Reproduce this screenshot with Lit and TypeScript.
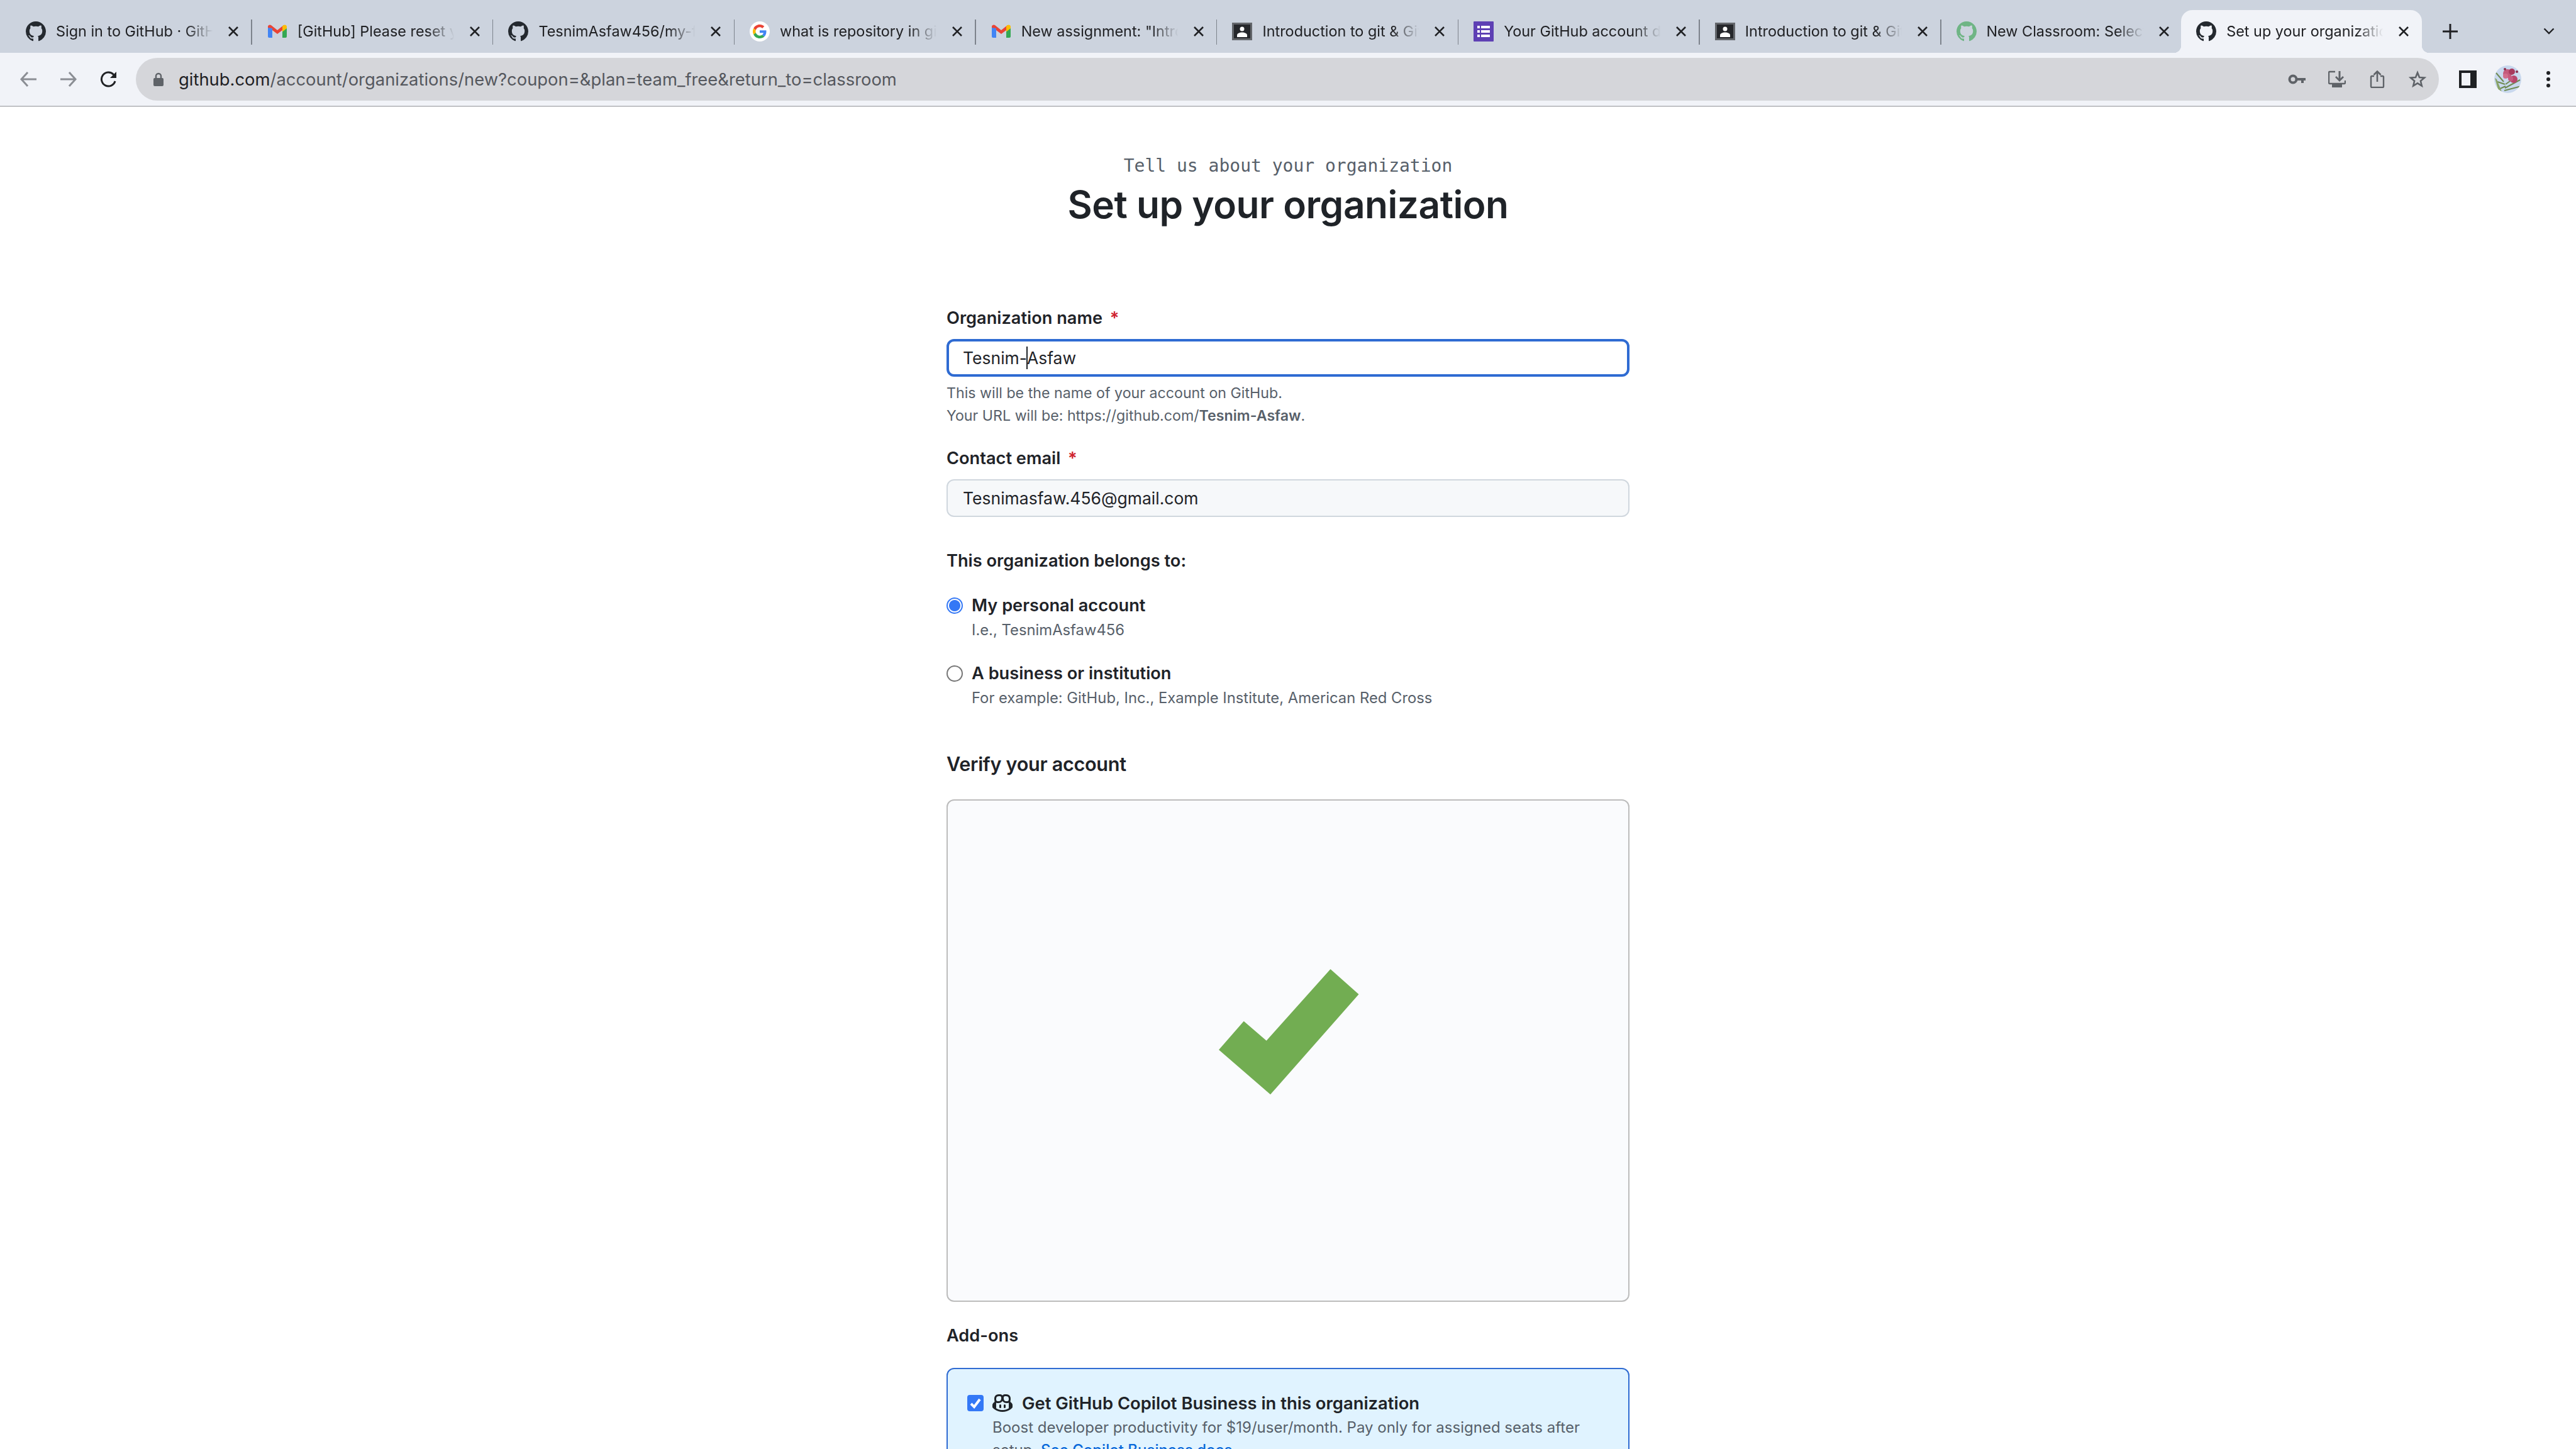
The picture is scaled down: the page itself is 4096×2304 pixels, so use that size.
import { LitElement, html, css } from "lit";
import { customElement } from "lit/decorators.js";

const GH_MARK =
  "M8 0c4.42 0 8 3.58 8 8a8.013 8.013 0 0 1-5.45 7.59c-.4.08-.55-.17-.55-.38 0-.27.01-1.13.01-2.2 0-.75-.25-1.23-.54-1.48 1.78-.2 3.65-.88 3.65-3.95 0-.88-.31-1.59-.82-2.15.08-.2.36-1.02-.08-2.12 0 0-.67-.22-2.2.82-.64-.18-1.32-.27-2-.27-.68 0-1.36.09-2 .27-1.53-1.03-2.2-.82-2.2-.82-.44 1.1-.16 1.92-.08 2.12-.51.56-.82 1.28-.82 2.15 0 3.06 1.86 3.75 3.64 3.95-.23.2-.44.55-.51 1.07-.46.21-1.61.55-2.33-.66-.15-.24-.6-.83-1.23-.82-.67.01-.27.38.01.53.34.19.73.9.82 1.13.16.45.68 1.31 2.69.94 0 .67.01 1.3.01 1.49 0 .21-.15.45-.55.38A7.995 7.995 0 0 1 0 8c0-4.42 3.58-8 8-8Z";

const COPILOT =
  "M7.998 15.035c-4.562 0-7.873-2.914-7.998-3.749V9.338c.085-.628.677-1.686 1.588-2.065.013-.07.024-.143.036-.218.029-.183.06-.384.126-.612-.201-.508-.254-1.084-.254-1.656 0-.87.128-1.769.693-2.484.579-.733 1.494-1.124 2.724-1.261 1.206-.134 2.262.034 2.944.765.05.053.096.108.139.165.044-.057.094-.112.143-.165.682-.731 1.738-.899 2.944-.765 1.23.137 2.145.528 2.724 1.261.566.715.693 1.614.693 2.484 0 .572-.053 1.148-.254 1.656.066.228.098.429.126.612.012.076.024.148.037.218.924.385 1.522 1.471 1.591 2.095v1.872c0 .766-3.351 3.795-8.002 3.795Zm0-1.485c2.28 0 4.584-1.11 5.002-1.433V7.862l-.023-.116c-.49.21-1.075.291-1.727.291-1.146 0-2.059-.327-2.71-.991A3.222 3.222 0 0 1 8 6.303a3.24 3.24 0 0 1-.544.743c-.65.664-1.563.991-2.71.991-.652 0-1.236-.081-1.727-.291l-.023.116v4.255c.419.323 2.722 1.433 5.002 1.433ZM6.762 2.83c-.193-.206-.637-.413-1.682-.297-1.019.113-1.479.404-1.713.7-.247.312-.369.789-.369 1.554 0 .793.129 1.171.308 1.371.162.181.519.379 1.442.379.853 0 1.339-.235 1.638-.54.315-.322.527-.827.617-1.553.117-.935-.037-1.395-.241-1.614Zm4.155-.297c-1.044-.116-1.488.091-1.681.297-.204.219-.359.679-.242 1.614.091.726.303 1.231.618 1.553.299.305.784.54 1.638.54.922 0 1.28-.198 1.442-.379.179-.2.308-.578.308-1.371 0-.765-.123-1.242-.37-1.554-.233-.296-.693-.587-1.713-.7ZM6.25 9.037a.75.75 0 0 1 .75.75v1.501a.75.75 0 0 1-1.5 0V9.787a.75.75 0 0 1 .75-.75Zm4.25.75v1.501a.75.75 0 0 1-1.5 0V9.787a.75.75 0 0 1 1.5 0Z";

type Fav = "gh" | "ghGreen" | "gmail" | "google" | "person" | "forms";

const TABS: { fav: Fav; title: string }[] = [
  { fav: "gh", title: "Sign in to GitHub · GitHub" },
  { fav: "gmail", title: "[GitHub] Please reset your password" },
  { fav: "gh", title: "TesnimAsfaw456/my-first-repo" },
  { fav: "google", title: "what is repository in git - Google Search" },
  { fav: "gmail", title: 'New assignment: "Introduction to git"' },
  { fav: "person", title: "Introduction to git & GitHub" },
  { fav: "forms", title: "Your GitHub account details" },
  { fav: "person", title: "Introduction to git & GitHub" },
  { fav: "ghGreen", title: "New Classroom: Select organization" },
];

function favicon(kind: Fav) {
  switch (kind) {
    case "gh":
      return html`<svg class="fav" viewBox="0 0 16 16"><path fill="#24292f" d=${GH_MARK} /></svg>`;
    case "ghGreen":
      return html`<svg class="fav" viewBox="0 0 16 16"><path fill="#6fb585" d=${GH_MARK} /></svg>`;
    case "gmail":
      return html`<svg class="fav" viewBox="0 0 32 32">
        <path fill="#4285f4" d="M1 9h7v17H3a2 2 0 0 1-2-2Z" />
        <path fill="#34a853" d="M24 9h7v15a2 2 0 0 1-2 2h-5Z" />
        <path fill="#ea4335" d="M1 10V8.500C1 6 4 4.500 6 6l10 8 10-8v6.500L16 20 8 14V11Z" />
        <path fill="#fbbc04" d="M24 7.600 26 6c2-1.500 5-.1 5 2.500V11l-7 5.500Z" />
      </svg>`;
    case "google":
      return html`<svg class="fav" viewBox="0 0 32 32">
        <circle cx="16" cy="16" r="16" fill="#fff" />
        <g transform="translate(5 5) scale(.458)">
          <path fill="#ea4335" d="M24 9.500c3.540 0 6.710 1.220 9.210 3.600l6.850-6.850C35.900 2.380 30.470 0 24 0 14.620 0 6.510 5.380 2.560 13.220l7.980 6.190C12.430 13.720 17.740 9.500 24 9.500z" />
          <path fill="#4285f4" d="M46.980 24.550c0-1.570-.15-3.090-.38-4.550H24v9.020h12.940c-.58 2.960-2.260 5.480-4.780 7.180l7.730 6c4.510-4.180 7.090-10.360 7.090-17.650z" />
          <path fill="#fbbc05" d="M10.530 28.590c-.48-1.450-.76-2.990-.76-4.590s.27-3.140.76-4.590l-7.980-6.190C.92 16.460 0 20.120 0 24c0 3.880.92 7.540 2.560 10.780l7.970-6.190z" />
          <path fill="#34a853" d="M24 48c6.480 0 11.930-2.130 16.090-5.810l-7.730-6c-2.150 1.450-4.920 2.300-8.370 2.300-6.260 0-11.570-4.220-13.470-9.910l-7.980 6.190C6.510 42.620 14.620 48 24 48z" />
        </g>
      </svg>`;
    case "person":
      return html`<svg class="fav" viewBox="0 0 32 32">
        <rect x="0" y="2" width="32" height="28" fill="#63666b" />
        <rect x="3" y="5" width="26" height="22" fill="#25272b" />
        <circle cx="16" cy="12" r="3.500" fill="#fff" />
        <path fill="#fff" d="M8 25v-3c0-3 4-4.500 8-4.500s8 1.500 8 4.500v3Z" />
      </svg>`;
    case "forms":
      return html`<svg class="fav" viewBox="0 0 32 32">
        <rect width="32" height="32" rx="1" fill="#5e40b4" />
        <g fill="#fff">
          <rect x="6" y="7" width="4" height="4" />
          <rect x="12" y="7" width="14" height="4" />
          <rect x="6" y="14" width="4" height="4" />
          <rect x="12" y="14" width="14" height="4" />
          <rect x="6" y="21" width="4" height="4" />
          <rect x="12" y="21" width="14" height="4" />
        </g>
      </svg>`;
  }
}

const closeIcon = html`<svg class="close" viewBox="0 0 18 18">
  <path d="M2 2l14 14M16 2 2 16" stroke="#202124" stroke-width="2.600" fill="none" />
</svg>`;

@customElement("app-root")
export class AppRoot extends LitElement {
  static styles = css`
    :host {
      display: block;
      width: 4096px;
      height: 2304px;
      overflow: hidden;
      background: #fff;
      font-family: Inter, "Liberation Sans", sans-serif;
      color: #1f2328;
    }

    /* tab strip */
    .strip {
      display: flex;
      align-items: flex-end;
      height: 84px;
      padding: 16px 0 0 17px;
      box-sizing: border-box;
      background: #ccd3de;
    }
    .tab {
      display: flex;
      align-items: center;
      width: 383.700px;
      flex: none;
      height: 68px;
      box-sizing: border-box;
      padding-left: 24px;
      position: relative;
    }
    .tab.sep::after {
      content: "";
      position: absolute;
      right: 0;
      top: 15px;
      width: 1.500px;
      height: 40px;
      background: #7d838c;
    }
    .tab.active {
      width: 383px;
      margin-left: -2px;
      background: #f1f3f8;
      border-radius: 18px 18px 0 0;
    }
    .tab.active::before,
    .tab.active::after {
      content: "";
      position: absolute;
      bottom: 0;
      width: 12px;
      height: 12px;
    }
    .tab.active::before {
      left: -12px;
      background: radial-gradient(circle at 0 0, transparent 12px, #f1f3f8 12.500px);
    }
    .tab.active::after {
      right: -12px;
      background: radial-gradient(circle at 100% 0, transparent 12px, #f1f3f8 12.500px);
    }
    .fav {
      width: 32px;
      height: 32px;
      flex: none;
    }
    .title {
      width: 252px;
      margin-left: 16px;
      flex: none;
      font-size: 23.400px;
      line-height: 34px;
      white-space: nowrap;
      overflow: hidden;
      color: #202124;
      -webkit-mask-image: linear-gradient(to right, #000 82%, transparent 99%);
      mask-image: linear-gradient(to right, #000 82%, transparent 99%);
    }
    .close {
      width: 18px;
      height: 18px;
      flex: none;
      margin-left: 21px;
    }
    .plus {
      width: 26px;
      height: 26px;
      margin: 0 0 21px 32px;
      flex: none;
    }
    .chevron {
      width: 18px;
      height: 11px;
      margin: 0 0 29px 135px;
      flex: none;
    }

    /* toolbar */
    .toolbar {
      display: flex;
      align-items: center;
      height: 86px;
      padding: 8px 0 8px 31px;
      box-sizing: border-box;
      background: #f1f3f8;
      border-bottom: 2px solid #c0c1c5;
    }
    .nav {
      width: 28px;
      height: 28px;
      flex: none;
      margin-right: 36px;
    }
    .nav.reload {
      margin-right: 29px;
    }
    .omni {
      display: flex;
      align-items: center;
      width: 3662px;
      height: 68px;
      flex: none;
      box-sizing: border-box;
      padding: 0 20px 0 27px;
      border-radius: 34px;
      background: #d5d6da;
    }
    .lock {
      width: 18px;
      height: 22px;
      flex: none;
    }
    .url {
      margin-left: 23px;
      font-size: 27.400px;
      color: #55585e;
      white-space: nowrap;
    }
    .url b {
      font-weight: 400;
      color: #1f2124;
    }
    .omni-icons {
      display: flex;
      align-items: center;
      gap: 36px;
      margin-left: auto;
    }
    .omni-icons svg {
      width: 28px;
      height: 28px;
      display: block;
    }
    .panel {
      width: 28px;
      height: 28px;
      flex: none;
      margin-left: 32px;
    }
    .avatar {
      width: 43px;
      height: 44px;
      flex: none;
      margin-left: 28px;
    }
    .dots {
      width: 28px;
      height: 28px;
      flex: none;
      margin-left: 29px;
    }

    /* page */
    .head {
      padding-top: 74px;
      text-align: center;
    }
    .eyebrow {
      font-family: "DejaVu Sans Mono", monospace;
      font-size: 28px;
      line-height: 40px;
      color: #57606a;
    }
    h1 {
      margin: 1px 0 0;
      font-size: 60.400px;
      line-height: 80px;
      font-weight: 600;
      letter-spacing: -0.5px;
    }
    .form {
      width: 1086px;
      margin: 121px auto 0;
    }
    .label {
      font-size: 27.200px;
      line-height: 40px;
      font-weight: 600;
    }
    .req {
      color: #cf222e;
      margin-left: 5px;
    }
    .input {
      display: flex;
      align-items: center;
      height: 60px;
      margin-top: 13px;
      box-sizing: border-box;
      padding: 0 24px;
      border: 2px solid #d0d7de;
      border-radius: 12px;
      background: #f6f8fa;
      font-size: 26.500px;
    }
    .input.focus {
      border: 4px solid #2f6bd2;
      padding: 0 22px;
      background: #fff;
    }
    .caret {
      display: inline-block;
      width: 2px;
      height: 36px;
      margin: 0 -1px;
      background: #1f2328;
    }
    .hint {
      margin-top: 8px;
      font-size: 23.200px;
      line-height: 36px;
      color: #57606a;
    }
    .hint b {
      font-weight: 600;
    }
    .contact {
      margin-top: 30px;
    }
    .belongs {
      margin-top: 50px;
    }
    .choice {
      margin-top: 31px;
    }
    .choice .label {
      display: flex;
      align-items: center;
      gap: 14px;
    }
    .choice .sub {
      padding-left: 40px;
      margin-top: 1px;
      font-size: 23.800px;
      line-height: 36px;
      color: #57606a;
    }
    .radio {
      width: 26px;
      height: 26px;
      flex: none;
      box-sizing: border-box;
      border: 2px solid #767676;
      border-radius: 50%;
      background: #fff;
    }
    .radio.on {
      border-color: #3478f6;
      background: radial-gradient(circle, #3478f6 8.500px, #fff 9.500px);
    }
    h2 {
      margin: 65px 0 0;
      font-size: 30.600px;
      line-height: 44px;
      font-weight: 600;
      letter-spacing: -0.3px;
    }
    .captcha {
      display: flex;
      align-items: center;
      justify-content: center;
      height: 799px;
      margin-top: 34px;
      box-sizing: border-box;
      border: 2px solid #bcbcbc;
      border-radius: 12px;
      background: #fafbfd;
    }
    .check {
      width: 223px;
      height: 200px;
      margin: -60px 0 0 3px;
    }
    .addons {
      margin-top: 34px;
    }
    .card {
      margin-top: 31px;
      padding: 34px 31px;
      border: 2px solid #2f6bd2;
      border-radius: 12px;
      background: #e0f3ff;
    }
    .card-title {
      display: flex;
      align-items: center;
      font-size: 27.400px;
      line-height: 40px;
      font-weight: 600;
    }
    .box {
      display: flex;
      align-items: center;
      justify-content: center;
      width: 26px;
      height: 26px;
      flex: none;
      border-radius: 4px;
      background: #3478f6;
    }
    .box svg {
      width: 20px;
      height: 20px;
    }
    .copilot {
      width: 32px;
      height: 32px;
      flex: none;
      margin: 0 15px 0 14px;
    }
    .card-desc {
      padding-left: 40px;
      margin-top: 1px;
      font-size: 24px;
      line-height: 36px;
      color: #57606a;
    }
    .card-desc a {
      color: #0969da;
      font-weight: 500;
      text-decoration: none;
    }
  `;

  render() {
    return html`
      <div class="strip">
        ${TABS.map(
          (t) => html`<div class="tab sep">
            ${favicon(t.fav)}
            <span class="title">${t.title}</span>
            ${closeIcon}
          </div>`
        )}
        <div class="tab active">
          ${favicon("gh")}
          <span class="title">Set up your organization</span>
          ${closeIcon}
        </div>
        <svg class="plus" viewBox="0 0 26 26">
          <path d="M13 1v24M1 13h24" stroke="#202124" stroke-width="3" fill="none" />
        </svg>
        <svg class="chevron" viewBox="0 0 18 11">
          <path d="M1.500 1.500 9 9l7.500-7.500" stroke="#202124" stroke-width="2.400" fill="none" />
        </svg>
      </div>

      <div class="toolbar">
        <svg class="nav" viewBox="0 0 28 28">
          <path d="M27 14H4M13 3 3 14l10 11" stroke="#8b8e94" stroke-width="3" fill="none" />
        </svg>
        <svg class="nav" viewBox="0 0 28 28">
          <path d="M1 14h23M15 3l10 11-10 11" stroke="#8b8e94" stroke-width="3" fill="none" />
        </svg>
        <svg class="nav reload" viewBox="0 0 28 28">
          <path d="M24 17a11 11 0 1 1-2.500-10.500L25 10" stroke="#202124" stroke-width="3" fill="none" />
          <path d="M26 2v10H16Z" fill="#202124" />
        </svg>
        <div class="omni">
          <svg class="lock" viewBox="0 0 18 22">
            <path d="M5 10V6a4 4 0 0 1 8 0v4" stroke="#5f6368" stroke-width="2.400" fill="none" />
            <rect x="1" y="9" width="16" height="13" rx="2" fill="#5f6368" />
          </svg>
          <span class="url"><b>github.com</b>/account/organizations/new?coupon=&amp;plan=team_free&amp;return_to=classroom</span>
          <div class="omni-icons">
            <svg viewBox="0 0 28 28">
              <circle cx="8" cy="14" r="5.500" stroke="#5f6368" stroke-width="4" fill="none" />
              <path d="M13 12h15v4h-3v4h-4v-4h-8Z" fill="#5f6368" />
            </svg>
            <svg viewBox="0 0 28 28">
              <path d="M11 2H2.500a1.500 1.500 0 0 0-1.500 1.500V19.500A1.500 1.500 0 0 0 2.500 21h23a1.500 1.500 0 0 0 1.500-1.500V16" stroke="#5f6368" stroke-width="2.400" fill="none" />
              <path d="M18 1v13" stroke="#5f6368" stroke-width="3" fill="none" />
              <path d="M12 10l6 6 6-6" stroke="#5f6368" stroke-width="2.800" fill="none" />
              <rect x="6" y="22" width="16" height="5" fill="#5f6368" />
            </svg>
            <svg viewBox="0 0 28 28">
              <path d="M9 9H5.500A1.500 1.500 0 0 0 4 10.500v15A1.500 1.500 0 0 0 5.500 27h17a1.500 1.500 0 0 0 1.500-1.500v-15A1.500 1.500 0 0 0 22.500 9H19" stroke="#5f6368" stroke-width="2.400" fill="none" />
              <path d="M14 18V2M8.500 7 14 1.500 19.500 7" stroke="#5f6368" stroke-width="2.600" fill="none" />
            </svg>
            <svg viewBox="0 0 28 28">
              <path d="M14 3.500 17 11l8 .6-6.100 5.200 1.900 7.800L14 20.400l-6.800 4.200 1.900-7.800L3 11.600l8-.6Z" stroke="#5f6368" stroke-width="2.600" fill="none" />
            </svg>
          </div>
        </div>
        <svg class="panel" viewBox="0 0 28 28">
          <path fill="#1f2124" fill-rule="evenodd" d="M0 0h28v28H0ZM4 4v20h14V4Z" />
        </svg>
        <svg class="avatar" viewBox="0 0 43 44">
          <defs>
            <clipPath id="av"><ellipse cx="21.500" cy="22" rx="21.500" ry="22" /></clipPath>
          </defs>
          <g clip-path="url(#av)">
            <rect width="43" height="44" fill="#c9d8ee" />
            <path d="M15 26 3 12M17 30 5 26M18 33 7 38M16 40l27-7M17 36l24-13M18 30 32 20" stroke="#6f8b52" stroke-width="2" fill="none" />
            <path d="M1 20 6 38 12 42 4 22Z" fill="#8aa468" />
            <circle cx="21" cy="13" r="7" fill="#c45a7c" />
            <circle cx="28" cy="10" r="5" fill="#a83a5e" />
            <circle cx="18" cy="17" r="4" fill="#d26d8c" />
            <circle cx="31" cy="22" r="6" fill="#b8466c" />
            <circle cx="26" cy="21" r="4" fill="#c75a80" />
            <circle cx="36" cy="10" r="2" fill="#8a2e4c" />
            <circle cx="17" cy="6" r="2" fill="#8a2e4c" />
          </g>
        </svg>
        <svg class="dots" viewBox="0 0 28 28">
          <circle cx="14" cy="4" r="3" fill="#202124" />
          <circle cx="14" cy="14" r="3" fill="#202124" />
          <circle cx="14" cy="24" r="3" fill="#202124" />
        </svg>
      </div>

      <div class="head">
        <div class="eyebrow">Tell us about your organization</div>
        <h1>Set up your organization</h1>
      </div>

      <div class="form">
        <div class="label">Organization name <span class="req">*</span></div>
        <div class="input focus">Tesnim-<span class="caret"></span>Asfaw</div>
        <div class="hint">
          This will be the name of your account on GitHub.<br />
          Your URL will be: https://github.com/<b>Tesnim-Asfaw</b>.
        </div>

        <div class="label contact">Contact email <span class="req">*</span></div>
        <div class="input">Tesnimasfaw.456@gmail.com</div>

        <div class="label belongs">This organization belongs to:</div>
        <div class="choice">
          <div class="label"><span class="radio on"></span>My personal account</div>
          <div class="sub">I.e., TesnimAsfaw456</div>
        </div>
        <div class="choice">
          <div class="label"><span class="radio"></span>A business or institution</div>
          <div class="sub">For example: GitHub, Inc., Example Institute, American Red Cross</div>
        </div>

        <h2>Verify your account</h2>
        <div class="captcha">
          <svg class="check" viewBox="0 0 223 200">
            <path fill="#72ad52" d="M177.500 0 222.500 40 82 199.300 0 128.300 39.700 82.700 75.700 113.700Z" />
          </svg>
        </div>

        <div class="label addons">Add-ons</div>
        <div class="card">
          <div class="card-title">
            <span class="box">
              <svg viewBox="0 0 20 20">
                <path d="M3 11l5 5 9-12" stroke="#fff" stroke-width="4" fill="none" />
              </svg>
            </span>
            <svg class="copilot" viewBox="0 0 16 16"><path fill="#1f2328" d=${COPILOT} /></svg>
            Get GitHub Copilot Business in this organization
          </div>
          <div class="card-desc">
            Boost developer productivity for $19/user/month. Pay only for assigned seats after<br />
            setup. <a>See Copilot Business docs</a>
          </div>
        </div>
      </div>
    `;
  }
}
